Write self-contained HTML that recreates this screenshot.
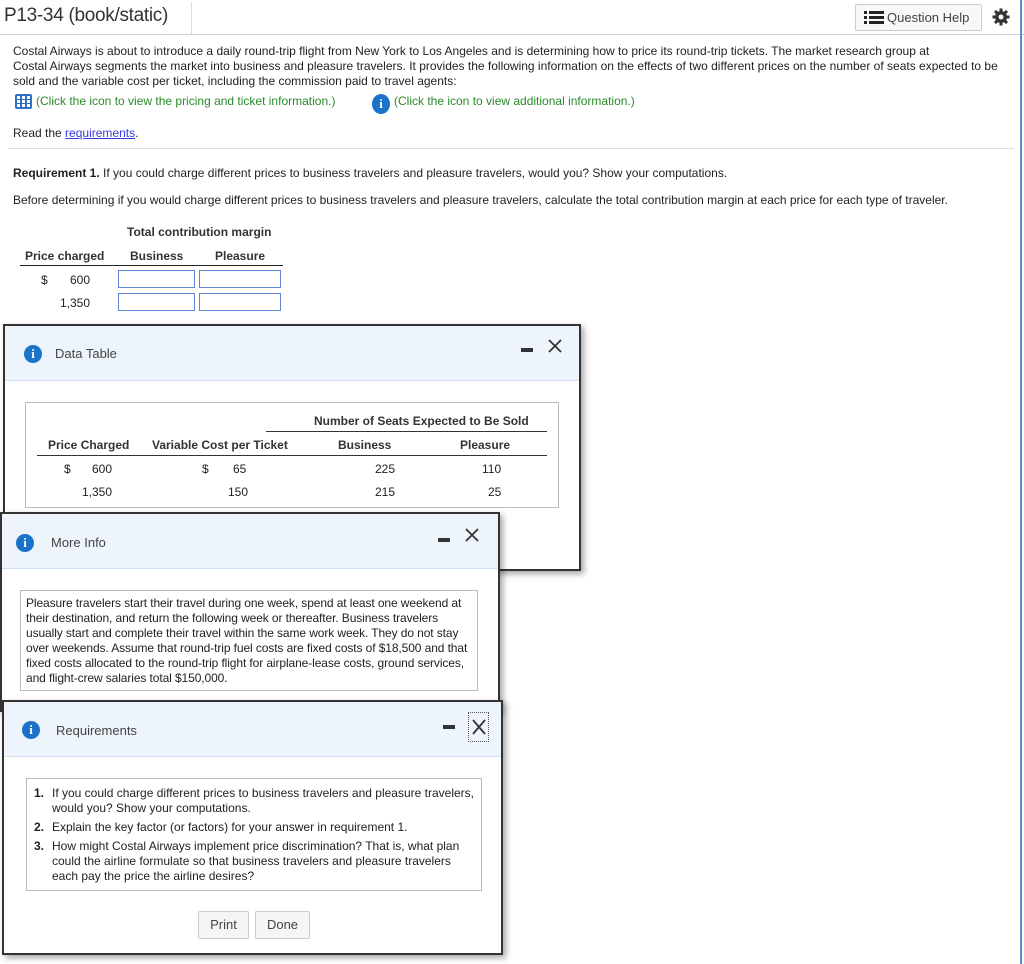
<!DOCTYPE html>
<html><head><meta charset="utf-8"><style>
*{box-sizing:border-box}
body{margin:0;width:1024px;height:964px;position:relative;background:#fff;font-family:"Liberation Sans",Arial,sans-serif;font-size:12px;color:#222;overflow:hidden}
.a{position:absolute;white-space:nowrap}
.dlg{position:absolute;background:#fff;border:2px solid #333;box-shadow:3px 3px 6px rgba(0,0,0,.35)}
.hd{position:absolute;left:0;right:0;top:0;background:#eef4fb;border-bottom:1px solid #cfe0f0}
.ic{position:absolute;width:18px;height:18px;border-radius:50%;background:#1a73c9;color:#fff;font:bold 13px "Liberation Serif",serif;text-align:center;line-height:18px}
.tt{position:absolute;font-size:13px;color:#444}
.mn{position:absolute;width:12px;height:4px;background:#333}
.x{position:absolute}
.box{position:absolute;border:1px solid #bbb}
.inp{position:absolute;border:1px solid #5b87d4;height:18px}
.btn{position:absolute;border:1px solid #ccc;border-radius:2px;background:#f5f5f5;font-size:13px;color:#444;text-align:center;line-height:26px}
li{display:flex}
li b{flex:none;width:18px}
</style></head><body>
<div class="a" style="left:4px;top:5px;font-size:19px;color:#333;letter-spacing:-0.3px">P13-34 (book/static)</div>
<div class="a" style="left:191px;top:2px;width:1px;height:32px;background:#ddd"></div>
<div class="a" style="left:0;top:34px;width:1024px;height:1px;background:#ccd"></div>
<div class="a" style="left:1020px;top:0;width:2px;height:964px;background:#5b8fd0"></div>
<div class="btn" style="left:855px;top:4px;width:127px;height:27px;background:#f8f8f8;line-height:25px;text-align:left;padding-left:31px">Question Help</div>
<svg class="a" style="left:864px;top:11px" width="20" height="13"><g fill="#222"><rect x="0" y="0" width="3" height="3"/><rect x="0" y="5" width="3" height="3"/><rect x="0" y="10" width="3" height="3"/><rect x="5" y="0" width="15" height="3"/><rect x="5" y="5" width="15" height="3"/><rect x="5" y="10" width="15" height="3"/></g></svg>
<svg class="a" style="left:992px;top:8px" width="18" height="18" viewBox="0 0 18 18"><g fill="#333"><circle cx="9" cy="9" r="6"/><rect x="7.5" y="0.5" width="3" height="17"/><rect x="0.5" y="7.5" width="17" height="3"/><rect x="7.5" y="0.5" width="3" height="17" transform="rotate(45 9 9)"/><rect x="7.5" y="0.5" width="3" height="17" transform="rotate(-45 9 9)"/></g><circle cx="9" cy="9" r="2.5" fill="#fff"/></svg>

<div class="a" style="left:13px;top:44px;line-height:15px;color:#222">Costal Airways is about to introduce a daily round-trip flight from New York to Los Angeles and is determining how to price its round-trip tickets. The market research group at<br>Costal Airways segments the market into business and pleasure travelers. It provides the following information on the effects of two different prices on the number of seats expected to be<br>sold and the variable cost per ticket, including the commission paid to travel agents:</div>
<svg class="a" style="left:15px;top:94px" width="17" height="15"><rect width="17" height="15" rx="2" fill="#2f6fc4"/><g fill="#fff"><rect x="2" y="2" width="3" height="3"/><rect x="7" y="2" width="3" height="3"/><rect x="12" y="2" width="3" height="3"/><rect x="2" y="6" width="3" height="3"/><rect x="7" y="6" width="3" height="3"/><rect x="12" y="6" width="3" height="3"/><rect x="2" y="10" width="3" height="3"/><rect x="7" y="10" width="3" height="3"/><rect x="12" y="10" width="3" height="3"/></g></svg>
<div class="a" style="left:36px;top:94px;color:#2a8a2a">(Click the icon to view the pricing and ticket information.)</div>
<div class="ic" style="left:372px;top:94px;width:18px;height:20px;line-height:20px">i</div>
<div class="a" style="left:394px;top:94px;color:#2a8a2a">(Click the icon to view additional information.)</div>
<div class="a" style="left:13px;top:126px">Read the <span style="color:#3a3adf;text-decoration:underline">requirements</span>.</div>
<div class="a" style="left:8px;top:148px;width:1006px;height:1px;background:#ddd"></div>
<div class="a" style="left:13px;top:166px"><b>Requirement 1.</b> If you could charge different prices to business travelers and pleasure travelers, would you? Show your computations.</div>
<div class="a" style="left:13px;top:193px">Before determining if you would charge different prices to business travelers and pleasure travelers, calculate the total contribution margin at each price for each type of traveler.</div>
<div class="a" style="left:127px;top:225px;font-weight:bold;color:#333">Total contribution margin</div>
<div class="a" style="left:25px;top:249px;font-weight:bold;color:#333">Price charged</div>
<div class="a" style="left:130px;top:249px;font-weight:bold;color:#333">Business</div>
<div class="a" style="left:215px;top:249px;font-weight:bold;color:#333">Pleasure</div>
<div class="a" style="left:20px;top:265px;width:263px;height:1px;background:#222"></div>
<div class="a" style="left:41px;top:273px">$</div><div class="a" style="left:70px;top:273px">600</div>
<div class="a" style="left:60px;top:296px">1,350</div>
<div class="inp" style="left:118px;top:270px;width:77px"></div><div class="inp" style="left:199px;top:270px;width:82px"></div>
<div class="inp" style="left:118px;top:293px;width:77px"></div><div class="inp" style="left:199px;top:293px;width:82px"></div>

<div class="dlg" style="left:3px;top:324px;width:578px;height:247px">
 <div class="hd" style="height:55px"></div>
 <div class="ic" style="left:19px;top:19px">i</div>
 <div class="tt" style="left:50px;top:20px">Data Table</div>
 <div class="mn" style="left:516px;top:22px"></div>
 <svg class="x" style="left:543px;top:13px" width="14" height="14"><path d="M1 1L13 13M13 1L1 13" stroke="#333" stroke-width="1.8"/></svg>
 <div class="box" style="left:20px;top:76px;width:534px;height:106px"></div>
 <div class="a" style="left:309px;top:88px;font-weight:bold;color:#333">Number of Seats Expected to Be Sold</div>
 <div class="a" style="left:261px;top:105px;width:281px;height:1px;background:#333"></div>
 <div class="a" style="left:43px;top:112px;font-weight:bold;color:#333">Price Charged</div>
 <div class="a" style="left:147px;top:112px;font-weight:bold;color:#333">Variable Cost per Ticket</div>
 <div class="a" style="left:333px;top:112px;font-weight:bold;color:#333">Business</div>
 <div class="a" style="left:455px;top:112px;font-weight:bold;color:#333">Pleasure</div>
 <div class="a" style="left:32px;top:129px;width:510px;height:1px;background:#333"></div>
 <div class="a" style="left:59px;top:136px">$</div><div class="a" style="left:87px;top:136px">600</div>
 <div class="a" style="left:197px;top:136px">$</div><div class="a" style="left:228px;top:136px">65</div>
 <div class="a" style="left:370px;top:136px">225</div><div class="a" style="left:477px;top:136px">110</div>
 <div class="a" style="left:77px;top:159px">1,350</div><div class="a" style="left:223px;top:159px">150</div>
 <div class="a" style="left:370px;top:159px">215</div><div class="a" style="left:483px;top:159px">25</div>
</div>

<div class="dlg" style="left:0;top:512px;width:500px;height:200px">
 <div class="hd" style="height:55px"></div>
 <div class="ic" style="left:14px;top:20px">i</div>
 <div class="tt" style="left:49px;top:21px">More Info</div>
 <div class="mn" style="left:436px;top:24px"></div>
 <svg class="x" style="left:463px;top:14px" width="14" height="14"><path d="M1 1L13 13M13 1L1 13" stroke="#333" stroke-width="1.8"/></svg>
 <div class="box" style="left:18px;top:76px;width:458px;height:101px"></div>
 <div class="a" style="left:24px;top:82px;line-height:15px;white-space:normal;width:446px;letter-spacing:-0.1px">Pleasure travelers start their travel during one week, spend at least one weekend at their destination, and return the following week or thereafter. Business travelers usually start and complete their travel within the same work week. They do not stay over weekends. Assume that round-trip fuel costs are fixed costs of $18,500 and that fixed costs allocated to the round-trip flight for airplane-lease costs, ground services, and flight-crew salaries total $150,000.</div>
</div>

<div class="dlg" style="left:2px;top:700px;width:501px;height:255px">
 <div class="hd" style="height:55px"></div>
 <div class="ic" style="left:18px;top:19px">i</div>
 <div class="tt" style="left:52px;top:21px">Requirements</div>
 <div class="mn" style="left:439px;top:23px"></div>
 <div class="x" style="left:464px;top:10px;border:1px dotted #555;width:21px;height:30px"></div>
 <svg class="x" style="left:468px;top:17px" width="14" height="16"><path d="M1 1L13 15M13 1L1 15" stroke="#333" stroke-width="1.8"/></svg>
 <div class="box" style="left:22px;top:76px;width:456px;height:113px"></div>
 <ul style="position:absolute;left:30px;top:84px;margin:0;padding:0;list-style:none;line-height:15px;width:440px">
  <li><b>1.</b><span>If you could charge different prices to business travelers and pleasure travelers, would you? Show your computations.</span></li>
  <li style="margin-top:4px"><b>2.</b><span>Explain the key factor (or factors) for your answer in requirement 1.</span></li>
  <li style="margin-top:4px"><b>3.</b><span>How might Costal Airways implement price discrimination? That is, what plan could the airline formulate so that business travelers and pleasure travelers each pay the price the airline desires?</span></li>
 </ul>
 <div class="btn" style="left:194px;top:209px;width:51px;height:28px">Print</div>
 <div class="btn" style="left:251px;top:209px;width:55px;height:28px">Done</div>
</div>
</body></html>
